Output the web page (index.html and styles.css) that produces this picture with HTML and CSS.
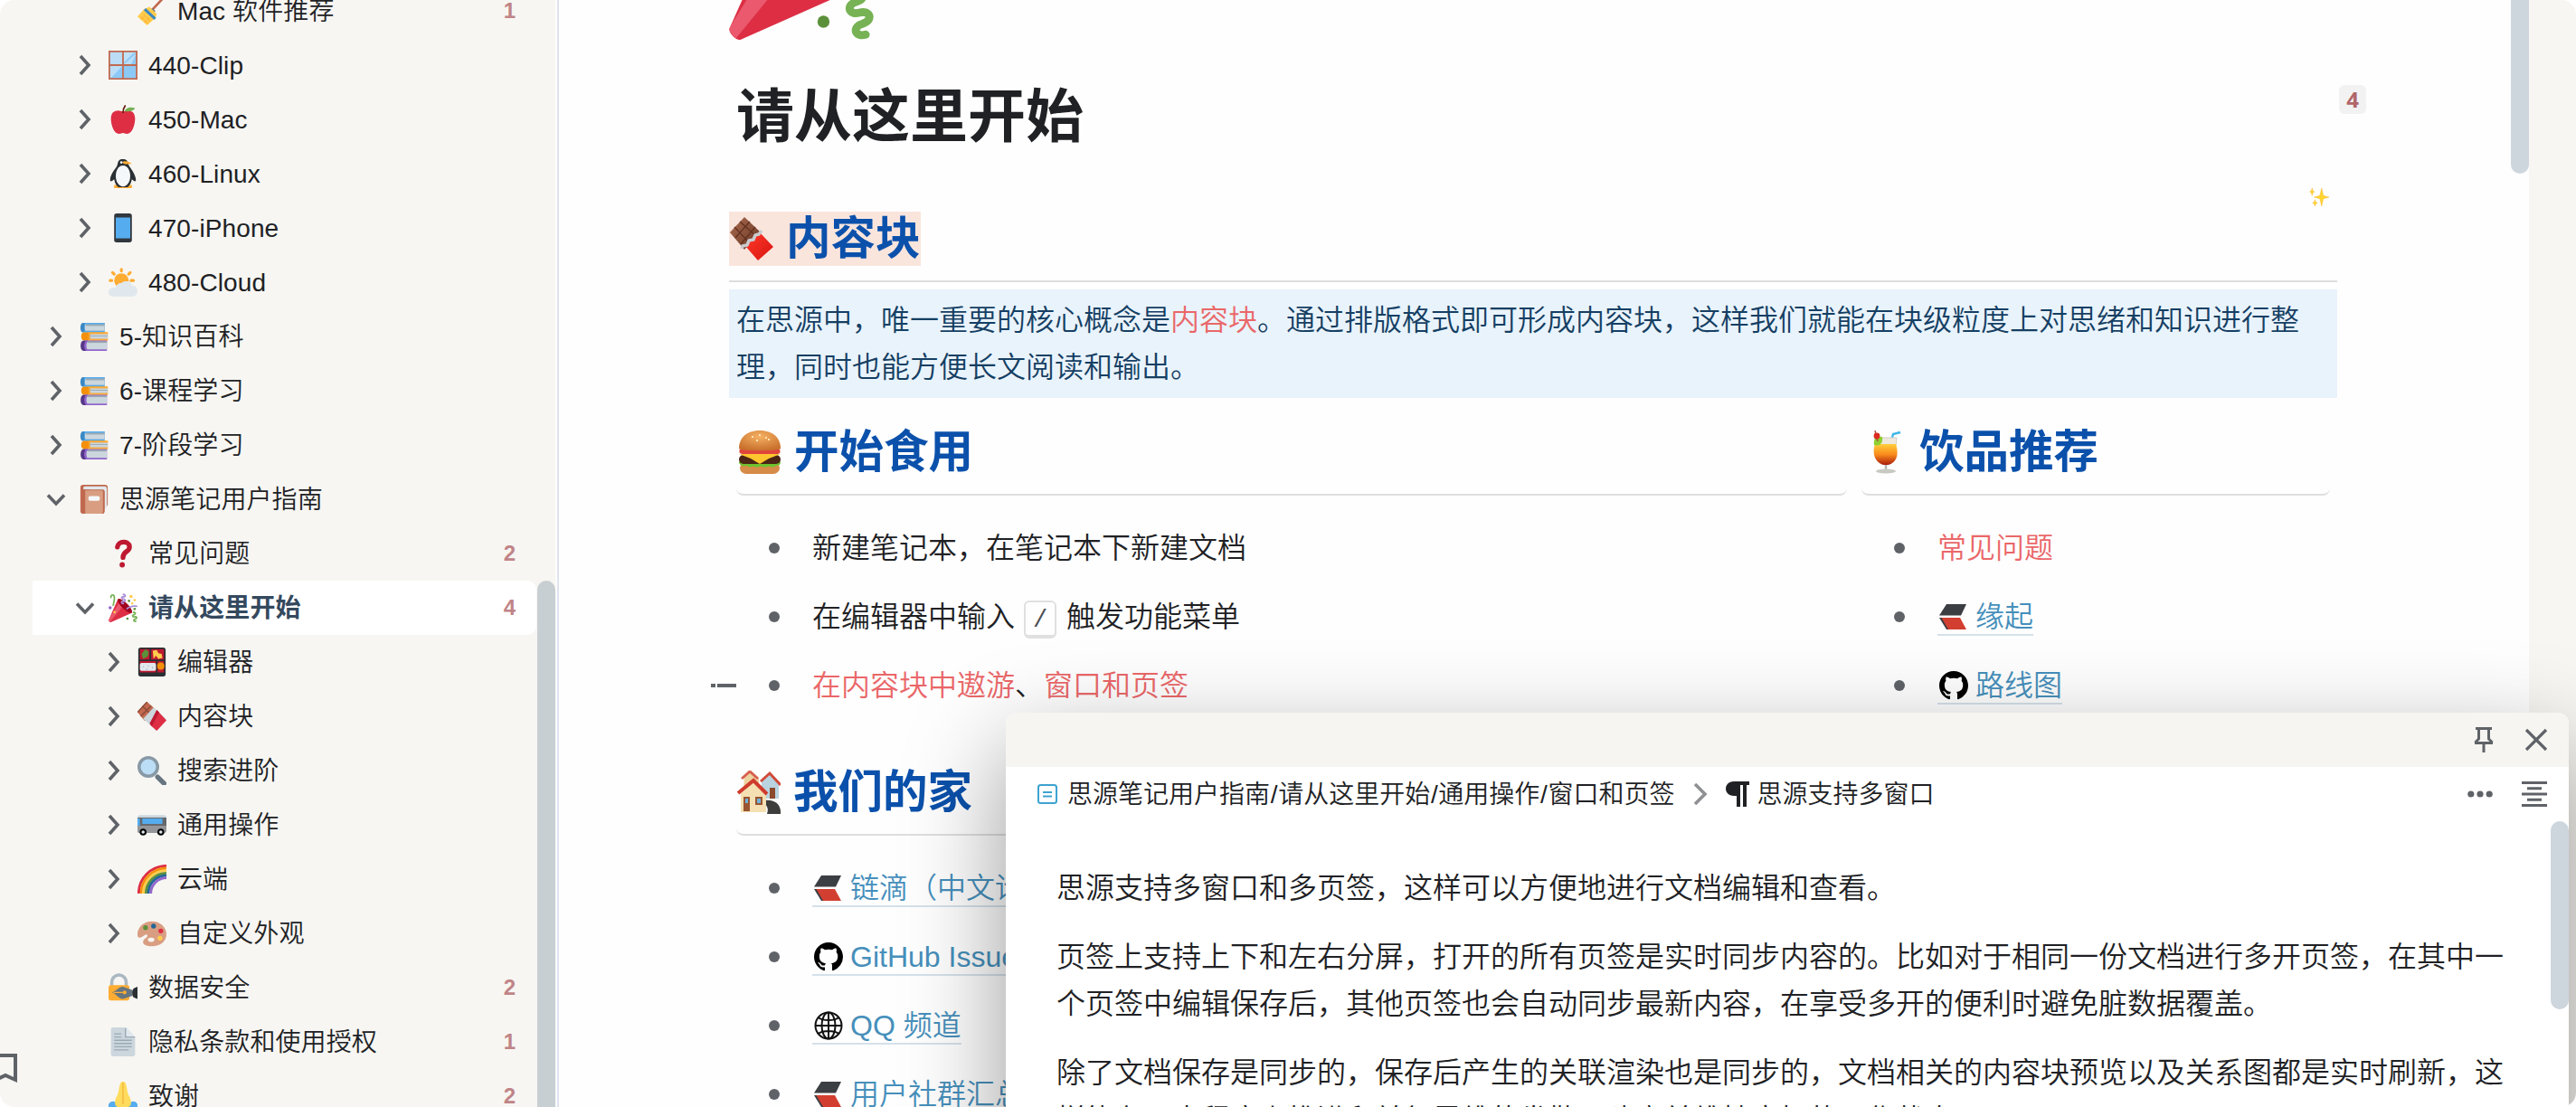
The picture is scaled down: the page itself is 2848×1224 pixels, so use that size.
FILE: index.html
```html
<!DOCTYPE html>
<html lang="zh-CN">
<head>
    <meta charset="UTF-8">
    <meta name="viewport" content="width=device-width, initial-scale=1.0">
    <title>请从这里开始 - 思源笔记</title>
    <link rel="stylesheet" href="styles.css">
</head>
<body>
    <!-- Iconos compartidos -->
    <svg class="sprite" width="0" height="0">
        <defs>
            <linearGradient id="gChoco" x1="0" y1="0" x2="1" y2="1"><stop offset="0" stop-color="#a8694d"/><stop offset="1" stop-color="#6b3826"/></linearGradient>
            <linearGradient id="gWrap" x1="0" y1="0" x2="1" y2="1"><stop offset="0" stop-color="#ff3a2c"/><stop offset="1" stop-color="#d8140f"/></linearGradient>
            <radialGradient id="gBun" cx=".5" cy=".3" r=".7"><stop offset="0" stop-color="#f5b163"/><stop offset="1" stop-color="#c9702c"/></radialGradient>
            <linearGradient id="gDrink" x1="0" y1="0" x2="0" y2="1"><stop offset="0" stop-color="#ffcf3c"/><stop offset=".5" stop-color="#f98a1c"/><stop offset="1" stop-color="#a81a0c"/></linearGradient>
        </defs>
        <symbol id="right" viewBox="0 0 24 24"><path d="M7 2l9 10-9 10" fill="none" stroke="currentColor" stroke-width="3.6"/></symbol>
        <symbol id="down" viewBox="0 0 24 24"><path d="M3 7.500l9 9.500 9-9.500" fill="none" stroke="currentColor" stroke-width="3.600"/></symbol>
        <symbol id="broom" viewBox="0 0 36 36"><path d="M18 17L34 0" stroke="#c1694f" stroke-width="3"/><path d="M15 16l4-1 3 3-1 4z" fill="#66757f"/><path d="M8 16l7-3 9 9-2 5-10 9L0 25z" fill="#ffcc4d"/><path d="M9 16l13 12" stroke="#3b88c3" stroke-width="3.500"/><path d="M4 25l9 9M7 22l9 9M4 29l5-5m0 9l6-6" stroke="#ffac33" stroke-width="1"/></symbol>
        <symbol id="window" viewBox="0 0 36 36"><path fill="#bbddf5" d="M1 1h34v34H1z"/><path fill="#8cc9f7" d="M35 3v32H19zM19 3h16L19 17zM3 34l14-15v16zM19 19h16v16H19z"/><path fill="#bfe2f9" d="M19 2h13L19 15z"/><path d="M1 1h34v34H1zM18 0v36M0 18h36" fill="none" stroke="#c1694f" stroke-width="2"/></symbol>
        <symbol id="apple" viewBox="0 0 36 36"><path fill="#dd2e44" d="M24 7c-3 0-3 1-6 1s-3-1-6-1C7 7 3 10 3 17c0 9 4 19 10 19 3 0 3-1 5-1s2 1 5 1c6 0 10-10 10-19 0-7-4-10-9-10z"/><path fill="#77b255" d="M20 8c1-4 6-6 13-4-1 3-7 5-13 4z"/><path d="M18 10c0-4 1-7 3-9.500" fill="none" stroke="#662113" stroke-width="2"/></symbol>
        <symbol id="penguin" viewBox="0 0 36 36"><path fill="#ffac33" d="M7 32h22v4H7z"/><path fill="#292f33" d="M18 0c5 0 6 3 7 7 1 3 9 11 9 19 0 3-3 1-5-1-1 5-3 9-6 10H13c-3-1-5-5-6-10-2 2-5 4-5 1 0-8 8-15 9-19 1-5 2-7 7-7z"/><path fill="#f5f8fa" d="M18 8c6 0 9 7 9 13 0 7-4 13-9 13S9 28 9 21c0-6 3-13 9-13z"/><circle cx="16" cy="4" r="1.600" fill="#fff"/><path fill="#ffac33" d="M18 3c4-1 8 0 11 3-4 0-8 1-11-1z"/></symbol>
        <symbol id="phone" viewBox="0 0 36 36"><rect x="7" width="22" height="36" rx="3" fill="#31373d"/><path fill="#55acee" d="M9 5h18v26H9z"/></symbol>
        <symbol id="cloud" viewBox="0 0 36 36"><circle cx="16" cy="16" r="9" fill="#ffac33"/><path d="M16 2v2M5 6l2 2M27 6l-2 2M2 16h2M28 16h3" stroke="#ffac33" stroke-width="3.600" stroke-linecap="round"/><path fill="#e1e8ed" d="M29 22c0-4-4-6-8-5-2 0-4 1-5 2-3 0-6 1-7 6-5-1-9 2-9 6 0 3 2 5 6 5h23c4 0 7-3 7-7s-3-7-7-7z"/></symbol>
        <symbol id="books" viewBox="0 0 36 36"><path fill="#3b88c3" d="M4 1h27v12H4c-4 0-4-12 0-12z"/><path fill="#55acee" d="M6 1h25v2H8v8h23v2H6z"/><path fill="#ccd6dd" d="M8 3h23v8H8c-2 0-2-8 0-8z"/><path fill="#9aaab4" d="M8 3h23v2H8z"/><path fill="#f4900c" d="M5 13h30v10H5c-4 0-4-10 0-10z"/><path fill="#ffac33" d="M11 13h24v2H12v6h23v2H11z"/><path fill="#ccd6dd" d="M13 15h22v6H13z"/><path fill="#9aaab4" d="M13 17h22v1H13z"/><path fill="#553788" d="M5 23h5v13H5c-5 0-5-13 0-13z"/><path fill="#9266cc" d="M8 23h26v13H8c-3-4-3-9 0-13z"/><path fill="#ccd6dd" d="M10 25h24v9H10c-2 0-2-9 0-9z"/><path fill="#9aaab4" d="M10 24h24v2H10z"/></symbol>
        <symbol id="notebook" viewBox="0 0 36 36"><path fill="#c1694f" d="M5 0h26c3 0 4 1 4 4v21l-4 5v2c0 3-1 4-4 4H5c-3 0-4-1-4-4V4c0-3 1-4 4-4z"/><path fill="#e1e8ed" d="M7 2h24c2 0 3 1 3 3v22l-3 5V8L5 6c-1-3 0-4 2-4z"/><path fill="#c1694f" d="M5 6h23c3 0 3 1 3 4v22c0 3-1 4-3 4H5z"/><path fill="#d99e82" d="M7 7h20c2 0 2 1 2 2v24c0 2-1 3-2 3H7z"/><rect x="11" y="14" width="14" height="6" rx="2" fill="#f5f8fa"/></symbol>
        <symbol id="question" viewBox="0 0 36 36"><path d="M11 10c1-8 14-8 15-1 1 8-8 5-8 14" fill="none" stroke="#be1931" stroke-width="6" stroke-linecap="round"/><circle cx="17" cy="32" r="3.300" fill="#be1931"/></symbol>
        <symbol id="party" viewBox="0 0 36 36">
            <path fill="#DD2E44" d="M11.626 7.488c-.112.112-.197.247-.268.395l-.008-.008L.134 33.141l.011.011c-.208.403.14 1.223.853 1.937.713.713 1.533 1.061 1.936.853l.01.01L28.21 24.735l-.008-.009c.147-.07.282-.155.395-.269 1.562-1.562-.971-6.627-5.656-11.313-4.687-4.686-9.752-7.218-11.315-5.656z"/>
            <path fill="#EA596E" d="M13 12L.416 32.506l-.282.635.011.011c-.208.403.14 1.223.853 1.937.232.232.473.408.709.557L17 17l-4-5z"/>
            <path fill="#A0041E" d="M23.012 13.066c4.67 4.672 7.263 9.652 5.789 11.124-1.473 1.474-6.453-1.118-11.126-5.788-4.671-4.672-7.263-9.654-5.79-11.127 1.474-1.473 6.454 1.119 11.127 5.791z"/>
            <path fill="none" stroke="#AA8DD8" stroke-width="2" stroke-linecap="round" d="M18.500 12.800c-3-.3-3-3.200 0-2.800s3-2.500 0-2.900-3-3.200 0-2.800 3-2.500 0-2.900"/>
            <path fill="#77B255" d="M30.661 22.857c1.973-.557 3.334.323 3.658 1.478.324 1.154-.378 2.615-2.35 3.17-.77.216-1.001.584-.97.701.034.118.425.312 1.193.095 1.972-.555 3.333.325 3.657 1.479.326 1.155-.378 2.614-2.351 3.17-.769.216-1.001.585-.967.702.033.117.423.311 1.192.095.53-.149 1.084.16 1.233.691.148.532-.161 1.084-.693 1.234-1.971.555-3.333-.323-3.659-1.479-.324-1.154.379-2.613 2.353-3.169.77-.217 1.001-.584.967-.702-.032-.117-.422-.312-1.19-.096-1.974.556-3.334-.322-3.659-1.479-.325-1.154.378-2.613 2.351-3.17.768-.215.999-.585.967-.701-.034-.118-.423-.312-1.192-.096-.532.15-1.083-.16-1.233-.691-.149-.53.161-1.082.693-1.232z"/>
            <path fill="#AA8DD8" d="M23.001 20.16c-.294 0-.584-.129-.782-.375-.345-.432-.274-1.061.156-1.406.218-.175 5.418-4.259 12.767-3.208.547.078.927.584.849 1.131-.078.546-.58.93-1.132.848-6.493-.922-11.187 2.754-11.233 2.791-.186.148-.406.219-.625.219z"/>
            <path fill="#77B255" d="M5.754 16c-.095 0-.192-.014-.288-.042-.529-.159-.829-.716-.67-1.245 1.133-3.773 2.160-9.794.898-11.364-.141-.178-.354-.353-.842-.316-.938.072-.849 2.051-.848 2.071.042.551-.372 1.031-.922 1.072-.559.034-1.031-.372-1.072-.923-.103-1.379.326-4.035 2.692-4.214 1.056-.08 1.933.287 2.552 1.057 2.371 2.951-.036 11.506-.542 13.192-.13.433-.528.712-.958.712z"/>
            <g fill="#5C913B"><circle cx="25.500" cy="9.500" r="1.500"/><circle cx="32.500" cy="19.500" r="1.500"/><circle cx="23.500" cy="31.500" r="1.500"/></g>
            <circle cx="2" cy="18" r="2" fill="#9266CC"/>
            <g fill="#FFCC4D"><circle cx="28" cy="4" r="2"/><circle cx="32.500" cy="8.500" r="1.500"/><circle cx="29.500" cy="12.500" r="1.500"/><circle cx="7.500" cy="23.500" r="1.500"/></g>
        </symbol>
        <symbol id="bento" viewBox="0 0 36 36"><rect x="1" width="34" height="36" rx="3" fill="#292f33"/><path fill="#be1931" d="M3 2h12v13H3zM17 2h16v13H17zM3 17h20v14H3zM25 17h8v14h-8z"/><path fill="#5c913b" d="M5 8l5-6 4 3-1 6-6 3z"/><path fill="#ffcc4d" d="M19 4l5-1 2 4 4 1 1 5-5 1-3-4-3 4z"/><rect x="3" y="19" width="20" height="10" rx="2" fill="#e1e8ed"/><path d="M7 24h1m5-1h1m4 2h1m-8 2h1" stroke="#9aaab4" stroke-width="1.500"/><circle cx="29" cy="23" r="4.500" fill="#f4900c"/></symbol>
        <symbol id="choco" viewBox="0 0 36 36"><path fill="#c1694f" d="M12 0l10 9L9 24 0 13z"/><path d="M6 5l11 11M17 5L4 18M12 0L0 13" fill="none" stroke="#8a4b38" stroke-width="1.600"/><path fill="#ccd6dd" d="M20 7l16 15-12 14L7 21z"/><path fill="#dd2e44" d="M24 10l12 13-12 13-8-7z"/><path fill="#be1931" d="M24 10l-9 17 3 3 9-17z"/></symbol>
        <symbol id="glass" viewBox="0 0 36 36"><path d="M25 26l8 8" stroke="#66757f" stroke-width="6" stroke-linecap="round"/><circle cx="13.500" cy="13.500" r="11.500" fill="#bbddf5" stroke="#8899a6" stroke-width="4"/></symbol>
        <symbol id="bus" viewBox="0 0 36 36"><path fill="#ccd6dd" d="M4 6h28c3 0 4 1 4 4H0c0-3 1-4 4-4z"/><path fill="#66696c" d="M0 9h36v15H0z"/><path fill="#939598" d="M0 19h36v6c0 2-1 3-3 3H2c-2 0-2-1-2-3z"/><path fill="#55acee" d="M6 10h25v7H6zM0 10h3v9H0z"/><g fill="#000"><circle cx="7" cy="27" r="4.300"/><circle cx="29" cy="27" r="4.300"/></g><g fill="#e1e8ed"><circle cx="7" cy="27" r="2"/><circle cx="29" cy="27" r="2"/></g></symbol>
        <symbol id="rainbow" viewBox="0 0 36 36"><g fill="none" stroke-width="3.200"><path stroke="#dd2e44" d="M1.500 36C1.500 17 17 1.500 36 1.500"/><path stroke="#f4900c" d="M4.500 36C4.500 19 19 4.500 36 4.500"/><path stroke="#ffcc4d" d="M7.500 36c0-16 13-28.500 28.500-28.500"/><path stroke="#5c913b" d="M10.500 36C10.500 22 22 10.500 36 10.500"/><path stroke="#226699" d="M13.500 36c0-13 10-22.500 22.500-22.500"/><path stroke="#9266cc" d="M16.500 36c0-11 9-19.500 19.500-19.500"/></g></symbol>
        <symbol id="palette" viewBox="0 0 36 36"><path fill="#d99e82" d="M18 3C8 3 0 10 0 19c0 3 1 5 4 4 3 0 6-5 8-3 2 3-4 4-5 8-1 4 5 6 11 6 10 0 18-6 18-15S28 3 18 3z"/><ellipse cx="17" cy="26" rx="4" ry="2.600" fill="#f7f6f2"/><circle cx="10" cy="11" r="3" fill="#5c913b"/><circle cx="20" cy="9" r="3" fill="#226699"/><circle cx="29" cy="15" r="3" fill="#dd2e44"/><circle cx="28" cy="24" r="3" fill="#ffcc4d"/></symbol>
        <symbol id="lock" viewBox="0 0 36 36"><path d="M4 17v-5C4 -1 22 -1 22 12v5" fill="none" stroke="#aab8c2" stroke-width="4"/><rect y="15" width="26" height="19" rx="3" fill="#ffac33"/><path fill="#66757f" d="M4 24c6-1 8-7 14-7l12 4v7l-12 4c-6 0-8-6-14-8z"/><path d="M6 24h13" stroke="#ffac33" stroke-width="1.500"/><circle cx="20" cy="24" r="2.300" fill="#ffac33"/><path fill="#292f33" d="M36 17v15l-5-2c-2-3-2-8 0-11z"/></symbol>
        <symbol id="page" viewBox="0 0 36 36"><path fill="#ccd6dd" d="M6 0h16l11 12v21c0 2-1 3-3 3H6c-2 0-3-1-3-3V3c0-2 1-3 3-3z"/><path fill="#e1e8ed" d="M22 0l11 12H24c-2 0-2-1-2-2z"/><path d="M21 1v11h12M7 8h9M7 12h9M7 16h22M7 20h22M7 24h22M7 28h18" fill="none" stroke="#99aab5" stroke-width="1.500"/></symbol>
        <symbol id="pray" viewBox="0 0 36 36"><path fill="#55acee" d="M0 28c3-5 8-4 10-1l8 5 8-5c3-4 8-3 10 1v8H0z"/><path fill="#ffdc5d" d="M17 0c-4 0-4 14-6 17-3 5-4 9-2 13l9 6 9-6c2-4 1-8-2-13-2-3-2-17-6-17z"/><path d="M18 1v27" stroke="#f2b43f" stroke-width="1.500"/></symbol>

        <symbol id="chocobar" viewBox="0 0 48 48"><path fill="url(#gChoco)" d="M16 0l17 16-17 20L0 17z"/><path d="M5 11l17 18M11 5l18 16M22 5L6 23M28 11L12 30" stroke="#5e2f1f" stroke-width="1.200" fill="none"/><path fill="url(#gWrap)" d="M33 17l15 16-17 15-14-16z"/><path d="M35 15l-3 4-4 1-2 5-5 1-2 5-5 1-1 3" fill="none" stroke="#c9cbd0" stroke-width="3.500"/></symbol>
        <symbol id="burger" viewBox="0 0 48 48"><rect x="2" y="35" width="44" height="13" rx="7" fill="#d68b48"/><path fill="#6cc32d" d="M1 35c0-4 46-4 46 0 0 5-5 3-7 5-3 2-5-2-8 0s-6-2-9 0-6-2-8 0-5-2-7-1-7-1-7-4z"/><rect x="1" y="27" width="46" height="10" rx="5" fill="#4a2415"/><path fill="#ffc52e" d="M1 26h46l-13 5-10 6-10-6z"/><path fill="#e0453c" d="M2 21h44c2 5-2 5-4 5H6c-3 0-6-1-4-5z"/><path fill="url(#gBun)" d="M1 20C1 6 12 0 24 0s23 6 23 20c0 3-46 3-46 0z"/><path d="M15 7h2m6-2h2m5 3h2m-12 3h2m11-1h2" stroke="#ffe3b0" stroke-width="1.800"/></symbol>
        <symbol id="drink" viewBox="0 0 48 48"><path d="M30 16l3-12 8-2" fill="none" stroke="#3fb6ea" stroke-width="2.400"/><path fill="#eee9dc" stroke="#d4cfc4" d="M13 8h24l-1 9H13z"/><path fill="url(#gDrink)" d="M13 15h23c3 9 2 17-4 21-4 3-10 3-14 0-6-4-8-12-5-21z"/><path d="M25 38v6" stroke="#b5b5b0" stroke-width="2.500"/><ellipse cx="25" cy="45" rx="11" ry="2.600" fill="#c9c9c4"/><path fill="#8ed02f" d="M12 16c-1-7 2-10 9-9 1 6-2 11-9 9z"/><path d="M13 0l3 12" stroke="#a4564a" stroke-width="1.500"/><circle cx="15" cy="6" r="3.400" fill="#dc2a20"/></symbol>
        <symbol id="houses" viewBox="0 0 48 48"><path fill="#ecd3a0" d="M8 7l7-6 9 7v12H7z"/><path d="M5 9l9-8 9 8" fill="none" stroke="#d8604f" stroke-width="3"/><path fill="#b9d3e0" d="M27 12l10-8 9 10v17H27z"/><path d="M26 12L36 3l12 13" fill="none" stroke="#cf4a38" stroke-width="3"/><path fill="#8b4a2b" d="M36 19h6v12h-6z"/><path fill="#3d3d3b" d="M30 33c13-2 19 6 18 15H33c2-6 0-9-3-12z"/><path fill="#f4e0b2" d="M4 25l14-11 14 13v19H4z"/><path d="M1 25l17-14 15 15" fill="none" stroke="#cf3b2c" stroke-width="4"/><path fill="#9b5430" d="M7 29h7v16H7zM20 29h8v9h-8z"/><path fill="#6fb4dc" d="M9 31h3v5H9zM22 31h4v5h-4z"/></symbol>
        <symbol id="sparkles" viewBox="0 0 24 24"><path fill="#ffd52e" stroke="#f7b52a" stroke-width=".5" d="M15 1l2 9 7 2-7 2-2 9-2-9-7-2 7-2zM3.500 1l1 3.500 2 1-2 1-1 3.500-1-3.500-2-1 2-1zM7 15l1 3 2 1-2 1-1 3-1-3-2-1 2-1z"/></symbol>
        <symbol id="ld" viewBox="0 0 32 32"><path fill="#3b3e43" d="M8 2h22l-6 12.500H0z"/><path fill="#3b3e43" d="M0 17h8l6 13H8z"/><path fill="#d23f31" d="M2.500 17H23l7 13H10z"/></symbol>
        <symbol id="github" viewBox="0 0 16 16"><path d="M8 0C3.580 0 0 3.580 0 8c0 3.540 2.290 6.530 5.470 7.590.4.070.55-.17.55-.38 0-.19-.01-.82-.01-1.490-2.010.37-2.530-.49-2.690-.94-.09-.23-.48-.94-.82-1.130-.28-.15-.68-.52-.01-.53.63-.01 1.080.58 1.230.82.72 1.210 1.870.87 2.330.66.07-.52.28-.87.51-1.070-1.780-.2-3.640-.89-3.640-3.950 0-.87.31-1.590.82-2.150-.08-.2-.36-1.020.08-2.120 0 0 .67-.21 2.200.82.64-.18 1.320-.27 2-.27s1.360.09 2 .27c1.530-1.040 2.200-.82 2.200-.82.44 1.100.16 1.920.08 2.120.51.56.82 1.270.82 2.150 0 3.070-1.870 3.750-3.650 3.950.29.25.54.73.54 1.480 0 1.070-.01 1.930-.01 2.200 0 .21.15.46.55.38A8.010 8.010 0 0 0 16 8c0-4.420-3.580-8-8-8z"/></symbol>
        <symbol id="globe" viewBox="0 0 32 32"><g fill="none" stroke="#111" stroke-width="2"><circle cx="16" cy="16" r="14.500"/><ellipse cx="16" cy="16" rx="7.500" ry="14.500"/><path d="M16 1v30M1 16h30M4.500 7c6 4 17 4 23 0M4.500 25c6-4 17-4 23 0"/></g></symbol>
    </svg>

    <div class="app">
        <aside class="sidebar">
            <ul class="tree">
                <li class="item level-3"><span class="arrow"></span><svg class="emoji"><use href="#broom"/></svg><span class="name">Mac 软件推荐</span><span class="count">1</span></li>
                <li class="item level-2"><svg class="arrow"><use href="#right"/></svg><svg class="emoji"><use href="#window"/></svg><span class="name">440-Clip</span></li>
                <li class="item level-2"><svg class="arrow"><use href="#right"/></svg><svg class="emoji"><use href="#apple"/></svg><span class="name">450-Mac</span></li>
                <li class="item level-2"><svg class="arrow"><use href="#right"/></svg><svg class="emoji"><use href="#penguin"/></svg><span class="name">460-Linux</span></li>
                <li class="item level-2"><svg class="arrow"><use href="#right"/></svg><svg class="emoji"><use href="#phone"/></svg><span class="name">470-iPhone</span></li>
                <li class="item level-2"><svg class="arrow"><use href="#right"/></svg><svg class="emoji"><use href="#cloud"/></svg><span class="name">480-Cloud</span></li>
                <li class="item level-1"><svg class="arrow"><use href="#right"/></svg><svg class="emoji"><use href="#books"/></svg><span class="name">5-知识百科</span></li>
                <li class="item level-1"><svg class="arrow"><use href="#right"/></svg><svg class="emoji"><use href="#books"/></svg><span class="name">6-课程学习</span></li>
                <li class="item level-1"><svg class="arrow"><use href="#right"/></svg><svg class="emoji"><use href="#books"/></svg><span class="name">7-阶段学习</span></li>
                <li class="item level-1"><svg class="arrow"><use href="#down"/></svg><svg class="emoji"><use href="#notebook"/></svg><span class="name">思源笔记用户指南</span></li>
                <li class="item level-2"><span class="arrow"></span><svg class="emoji"><use href="#question"/></svg><span class="name">常见问题</span><span class="count">2</span></li>
                <li class="item level-2 active"><svg class="arrow"><use href="#down"/></svg><svg class="emoji"><use href="#party"/></svg><span class="name">请从这里开始</span><span class="count">4</span></li>
                <li class="item level-3"><svg class="arrow"><use href="#right"/></svg><svg class="emoji"><use href="#bento"/></svg><span class="name">编辑器</span></li>
                <li class="item level-3"><svg class="arrow"><use href="#right"/></svg><svg class="emoji"><use href="#choco"/></svg><span class="name">内容块</span></li>
                <li class="item level-3"><svg class="arrow"><use href="#right"/></svg><svg class="emoji"><use href="#glass"/></svg><span class="name">搜索进阶</span></li>
                <li class="item level-3"><svg class="arrow"><use href="#right"/></svg><svg class="emoji"><use href="#bus"/></svg><span class="name">通用操作</span></li>
                <li class="item level-3"><svg class="arrow"><use href="#right"/></svg><svg class="emoji"><use href="#rainbow"/></svg><span class="name">云端</span></li>
                <li class="item level-3"><svg class="arrow"><use href="#right"/></svg><svg class="emoji"><use href="#palette"/></svg><span class="name">自定义外观</span></li>
                <li class="item level-2"><span class="arrow"></span><svg class="emoji"><use href="#lock"/></svg><span class="name">数据安全</span><span class="count">2</span></li>
                <li class="item level-2"><span class="arrow"></span><svg class="emoji"><use href="#page"/></svg><span class="name">隐私条款和使用授权</span><span class="count">1</span></li>
                <li class="item level-2"><span class="arrow"></span><svg class="emoji"><use href="#pray"/></svg><span class="name">致谢</span><span class="count">2</span></li>
            </ul>
            <svg class="bookmark" viewBox="0 0 20 34"><path d="M-8 3H17V30L6 25L-5 30" fill="none" stroke="#5f6368" stroke-width="4"/></svg>
            <div class="scroll-side"></div>
        </aside>

        <main class="editor">
            <div class="doc">
                <svg class="doc-icon"><use href="#party"/></svg>
                <h1>请从这里开始</h1>
                <h2 class="main-heading"><span class="mark"><svg class="emoji-lg"><use href="#chocobar"/></svg>内容块</span></h2>
                <p class="intro">在思源中，唯一重要的核心概念是<span class="ref">内容块</span>。通过排版格式即可形成内容块，这样我们就能在块级粒度上对思绪和知识进行整<br>理，同时也能方便长文阅读和输出。</p>

                <div class="columns">
                    <section class="col-left">
                        <h2><svg class="emoji-lg"><use href="#burger"/></svg>开始食用</h2>
                        <ul class="list">
                            <li>新建笔记本，在笔记本下新建文档</li>
                            <li>在编辑器中输入<kbd>/</kbd>触发功能菜单</li>
                            <li class="hovered"><span class="ref">在内容块中遨游</span>、<span class="ref">窗口和页签</span></li>
                        </ul>
                        <h2 class="second"><svg class="emoji-lg"><use href="#houses"/></svg>我们的家</h2>
                        <ul class="list">
                            <li><a><svg class="link-icon"><use href="#ld"/></svg>链滴（中文论坛）</a></li>
                            <li><a><svg class="link-icon"><use href="#github"/></svg>GitHub Issues</a></li>
                            <li><a><svg class="link-icon"><use href="#globe"/></svg>QQ 频道</a></li>
                            <li><a><svg class="link-icon"><use href="#ld"/></svg>用户社群汇总</a></li>
                        </ul>
                    </section>
                    <section class="col-right">
                        <h2><svg class="emoji-lg"><use href="#drink"/></svg>饮品推荐</h2>
                        <ul class="list">
                            <li><span class="ref">常见问题</span></li>
                            <li><a><svg class="link-icon"><use href="#ld"/></svg>缘起</a></li>
                            <li><a><svg class="link-icon"><use href="#github"/></svg>路线图</a></li>
                        </ul>
                    </section>
                </div>
            </div>
            <span class="doc-count">4</span>
            <svg class="sparkles"><use href="#sparkles"/></svg>
            <div class="scroll-main"></div>
        </main>

        <!-- Ventana flotante -->
        <div class="popover">
            <div class="popover-head">
                <svg class="icon-pin" width="28" height="28" viewBox="0 0 28 28"><path d="M5 1.500h18M8.500 2v11l-4 4M19.500 2v11l4 4M4 17.500h20M14 17v11" fill="none" stroke="currentColor" stroke-width="3"/></svg>
                <svg width="28" height="28" viewBox="0 0 28 28"><path d="M3 3l22 22M25 3L3 25" stroke="currentColor" stroke-width="3.200"/></svg>
            </div>
            <div class="breadcrumb">
                <svg width="22" height="22" viewBox="0 0 22 22"><rect x="1" y="1" width="20" height="20" rx="2.500" fill="none" stroke="#3ea3d0" stroke-width="2"/><path d="M6 9h10M6 13.500h10" stroke="#3ea3d0" stroke-width="2"/></svg>
                <span class="path">思源笔记用户指南<i>/</i>请从这里开始<i>/</i>通用操作<i>/</i>窗口和页签</span>
                <svg class="sep" width="16" height="24" viewBox="0 0 16 24"><path d="M2 1l11 11L2 23" fill="none" stroke="#8f9194" stroke-width="3.600"/></svg>
                <svg class="para" width="26" height="28" viewBox="0 0 26 28"><path fill="#202124" d="M9 0h17v4h-3v24h-4V4h-3v24h-4V16H9C-3 16-3 0 9 0z"/></svg>
                <span class="path-end">思源支持多窗口</span>
                <svg class="more" width="28" height="28" viewBox="0 0 28 28"><g fill="currentColor"><circle cx="3.800" cy="14" r="3.600"/><circle cx="14" cy="14" r="3.600"/><circle cx="24.200" cy="14" r="3.600"/></g></svg>
                <svg width="28" height="28" viewBox="0 0 28 28"><path d="M0 1.500h28M6 7.800h16M0 14h28M6 20.200h16M0 26.500h28" stroke="currentColor" stroke-width="3"/></svg>
            </div>
            <div class="popover-body">
                <p>思源支持多窗口和多页签，这样可以方便地进行文档编辑和查看。</p>
                <p>页签上支持上下和左右分屏，打开的所有页签是实时同步内容的。比如对于相同一份文档进行多开页签，在其中一<br>个页签中编辑保存后，其他页签也会自动同步最新内容，在享受多开的便利时避免脏数据覆盖。</p>
                <p>除了文档保存是同步的，保存后产生的关联渲染也是同步的，文档相关的内容块预览以及关系图都是实时刷新，这<br>样能在更大程度上推进和并行思维的发散，建立并维持良好的工作状态。</p>
            </div>
            <div class="scroll-pop"></div>
        </div>
    </div>
</body>
</html>
```
FILE: styles.css
```css
html {
    background: #fff;
}
body {
    margin: 0;
    font-family: "Liberation Sans", "Noto Sans CJK SC", sans-serif;
    font-weight: 350;
    color: #202124;
    overflow: hidden;
}
ul, h1, h2, p {
    margin: 0;
    padding: 0;
}
ul {
    list-style: none;
}
svg {
    flex-shrink: 0;
}
.sprite {
    position: absolute;
}
.app {
    position: relative;
    display: flex;
    width: 2848px;
    height: 1224px;
    overflow: hidden;
    border-radius: 16px;
    background: #f7f6f2;
}

/* Barra lateral */
.sidebar {
    position: relative;
    width: 616px;
    height: 1224px;
    flex-shrink: 0;
    box-sizing: border-box;
    border-right: 2px solid #fdfdfd;
}
.tree {
    margin: -18px 21px 0 36px;
}
.item {
    display: flex;
    align-items: center;
    height: 60px;
    font-size: 28px;
    border-radius: 0 10px 10px 0;
}
.level-1 {
    padding-left: 14px;
}
.level-2 {
    padding-left: 46px;
}
.level-3 {
    padding-left: 78px;
}
.arrow {
    width: 24px;
    height: 24px;
    margin-right: 14px;
    color: #5f6368;
}
.emoji {
    width: 32px;
    height: 32px;
    margin-right: 12px;
}
.name {
    flex: 1;
    padding-top: 1px;
    line-height: 32px;
    letter-spacing: 0.1px;
    white-space: nowrap;
}
.count {
    margin-right: 23px;
    font-size: 24px;
    font-weight: bold;
    color: #c08487;
}
.active {
    background: #fff;
}
.active .name {
    font-weight: bold;
    color: #34495e;
}
.bookmark {
    position: absolute;
    left: 0;
    top: 1164px;
    width: 20px;
    height: 34px;
}
.scroll-side {
    position: absolute;
    top: 642px;
    right: 0;
    bottom: -20px;
    width: 20px;
    border-radius: 10px;
    background: #c7cfd2;
}

/* Editor */
.editor {
    position: relative;
    width: 2178px;
    height: 1224px;
    flex-shrink: 0;
    border-left: 2px solid #e0e4f0;
    background: #fefefe;
    overflow: hidden;
}
.doc {
    width: 1778px;
    margin-left: 188px;
}
.doc-icon {
    display: block;
    width: 160px;
    height: 160px;
    margin-top: -116px;
}
h1 {
    margin-top: 41px;
    padding-left: 8px;
    font-size: 64px;
    line-height: 88px;
}
h2 {
    display: flex;
    align-items: center;
    font-size: 49.5px;
    line-height: 60px;
    color: #0b51ab;
    border-bottom: 2px solid #dedede;
}
.main-heading {
    margin-top: 61px;
    padding-bottom: 16px;
}
.mark {
    display: flex;
    align-items: center;
    width: 212px;
    background: #fae5dd;
}
.mark .emoji-lg {
    margin: 0 14px 0 1px;
}
.emoji-lg {
    width: 48px;
    height: 48px;
    margin-right: 14px;
}
.intro {
    margin-top: 8px;
    padding: 8px 8px;
    font-size: 32px;
    line-height: 52px;
    white-space: nowrap;
    color: #153f63;
    background: #e9f3fc;
}
.ref {
    color: #ea6769;
}
.columns {
    display: flex;
    gap: 16px;
    margin-left: 8px;
}
.columns h2 {
    margin-top: 30px;
    padding: 0 0 16px 2px;
    border-radius: 8px;
}
.columns .second {
    margin-top: 50px;
    padding: 0 0 16px 1px;
}
.col-left {
    width: 1228px;
}
.col-right {
    width: 518px;
}
.list {
    margin-top: 20px;
}
.list li {
    position: relative;
    display: flex;
    align-items: center;
    height: 52px;
    padding: 12px 0 12px 84px;
    font-size: 32px;
    line-height: 52px;
    white-space: nowrap;
}
.list li::before {
    content: "";
    position: absolute;
    left: 36px;
    top: 32px;
    width: 12px;
    height: 12px;
    border-radius: 50%;
    background: #5f6368;
}
.hovered::after {
    content: "";
    position: absolute;
    left: -28px;
    top: 36px;
    width: 28px;
    height: 4px;
    background: linear-gradient(to right, #5f6368 5px, transparent 5px, transparent 7px, #5f6368 7px);
}
kbd {
    box-sizing: border-box;
    width: 36px;
    height: 42px;
    margin: 6px 11px 0 10px;
    border: 2px solid #e0e0e0;
    border-bottom-width: 4px;
    border-radius: 6px;
    font-family: "Liberation Mono", monospace;
    font-size: 27px;
    line-height: 40px;
    text-align: center;
    color: #4b4f54;
}
a {
    display: flex;
    align-items: center;
    height: 42px;
    border-bottom: 2px solid #d5e1ea;
    box-sizing: border-box;
    padding-top: 2px;
    color: #468fbb;
}
.link-icon {
    width: 32px;
    height: 32px;
    margin: 0 8px 0 2px;
}
.doc-count {
    position: absolute;
    left: 1968px;
    top: 94px;
    width: 30px;
    height: 32px;
    border-radius: 6px;
    background: #f2f2f2;
    font: bold 24px/32px "Open Sans", sans-serif;
    text-align: center;
    color: #b0666a;
}
.sparkles {
    position: absolute;
    left: 1935px;
    top: 207px;
    width: 22px;
    height: 22px;
}
.scroll-main {
    position: absolute;
    top: -20px;
    right: 0;
    width: 20px;
    height: 212px;
    border-radius: 10px;
    background: #cdd5dd;
}

/* Ventana flotante */
.popover {
    position: absolute;
    left: 1112px;
    top: 788px;
    width: 1728px;
    height: 600px;
    border-radius: 12px;
    background: #fff;
    overflow: hidden;
    box-shadow: 0 40px 110px rgba(0, 0, 0, 0.4);
}
.popover-head {
    display: flex;
    align-items: center;
    justify-content: flex-end;
    gap: 30px;
    height: 60px;
    padding-right: 22px;
    color: #5f6368;
    background: #f6f5f1;
}
.breadcrumb {
    display: flex;
    align-items: center;
    height: 60px;
    padding: 0 24px 0 35px;
    font-size: 28px;
    line-height: 32px;
    white-space: nowrap;
}
.breadcrumb .path {
    margin-left: 11px;
}
.breadcrumb .path, .breadcrumb .path-end {
    padding-top: 1px;
}
.breadcrumb i {
    padding: 0 0.7px;
    font-style: normal;
}
.sep {
    margin: 0 20px 0 20px;
}
.para {
    margin-right: 9px;
}
.more {
    margin-left: auto;
    margin-right: 32px;
}
.breadcrumb .more, .breadcrumb .more + svg {
    color: #5f6368;
}
.popover-body {
    padding: 48px 0 0 56px;
    font-size: 32px;
    line-height: 52px;
    white-space: nowrap;
}
.popover-body p {
    margin-bottom: 24px;
}
.scroll-pop {
    position: absolute;
    top: 120px;
    right: 0;
    width: 20px;
    height: 208px;
    border-radius: 10px;
    background: #cdd5dd;
}
```
